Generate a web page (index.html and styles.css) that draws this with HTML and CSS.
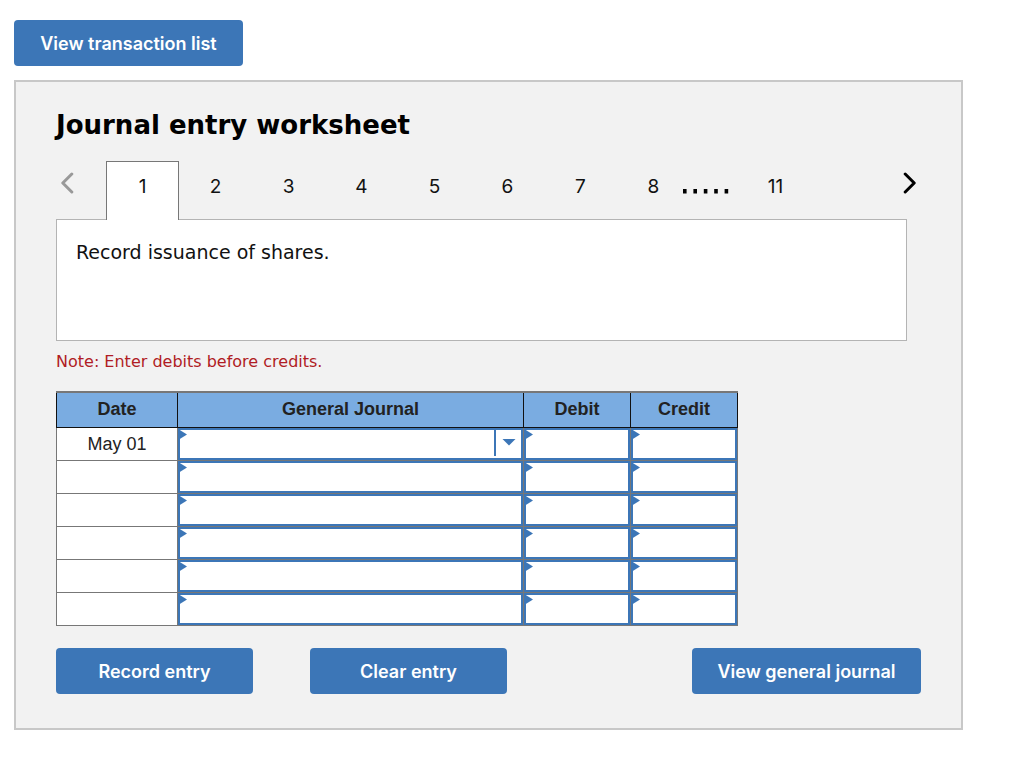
FILE: index.html
```html
<!DOCTYPE html>
<html lang="en">
<head>
    <meta charset="UTF-8">
    <meta name="viewport" content="width=device-width, initial-scale=1.0">
    <title>Journal entry worksheet</title>
    <link rel="stylesheet" href="styles.css">
</head>
<body>

    <button type="button" class="button button-wide">View transaction list</button>

    <!-- Worksheet -->
    <div class="worksheet">
        <h1>Journal entry worksheet</h1>

        <!-- Entry tabs -->
        <div class="tabs">
            <button type="button" class="arrow prev" aria-label="Previous entry" disabled>
                <svg width="14" height="22" viewBox="0 0 14 22"><path d="M11.8 2 L2.8 11 L11.8 20"/></svg>
            </button>
            <button type="button" class="tab active">1</button>
            <button type="button" class="tab">2</button>
            <button type="button" class="tab">3</button>
            <button type="button" class="tab">4</button>
            <button type="button" class="tab">5</button>
            <button type="button" class="tab">6</button>
            <button type="button" class="tab">7</button>
            <button type="button" class="tab">8</button>
            <svg class="dots" width="50" height="5" viewBox="0 0 50 5"><path d="M2 0h3.6v4.4h-3.6zM12.4 0h3.6v4.4h-3.6zM22.8 0h3.6v4.4h-3.6zM33.2 0h3.6v4.4h-3.6zM43.6 0h3.6v4.4h-3.6z"/></svg>
            <button type="button" class="tab last">11</button>
            <button type="button" class="arrow next" aria-label="Next entry">
                <svg width="14" height="22" viewBox="0 0 14 22"><path d="M2.2 2 L11.2 11 L2.2 20"/></svg>
            </button>
        </div>

        <div class="description">Record issuance of shares.</div>
        <p class="note">Note: Enter debits before credits.</p>

        <!-- Journal table -->
        <table class="journal">
            <thead>
                <tr>
                    <th class="col-date">Date</th>
                    <th>General Journal</th>
                    <th class="col-amount">Debit</th>
                    <th class="col-amount">Credit</th>
                </tr>
            </thead>
            <tbody>
                <tr>
                    <td>May 01</td>
                    <td class="entry account"><select aria-label="Account, line 1"><option></option></select></td>
                    <td class="entry"><input type="text" aria-label="Debit, line 1"></td>
                    <td class="entry"><input type="text" aria-label="Credit, line 1"></td>
                </tr>
                <tr>
                    <td></td>
                    <td class="entry"><input type="text" aria-label="Account, line 2"></td>
                    <td class="entry"><input type="text" aria-label="Debit, line 2"></td>
                    <td class="entry"><input type="text" aria-label="Credit, line 2"></td>
                </tr>
                <tr>
                    <td></td>
                    <td class="entry"><input type="text" aria-label="Account, line 3"></td>
                    <td class="entry"><input type="text" aria-label="Debit, line 3"></td>
                    <td class="entry"><input type="text" aria-label="Credit, line 3"></td>
                </tr>
                <tr>
                    <td></td>
                    <td class="entry"><input type="text" aria-label="Account, line 4"></td>
                    <td class="entry"><input type="text" aria-label="Debit, line 4"></td>
                    <td class="entry"><input type="text" aria-label="Credit, line 4"></td>
                </tr>
                <tr>
                    <td></td>
                    <td class="entry"><input type="text" aria-label="Account, line 5"></td>
                    <td class="entry"><input type="text" aria-label="Debit, line 5"></td>
                    <td class="entry"><input type="text" aria-label="Credit, line 5"></td>
                </tr>
                <tr>
                    <td></td>
                    <td class="entry"><input type="text" aria-label="Account, line 6"></td>
                    <td class="entry"><input type="text" aria-label="Debit, line 6"></td>
                    <td class="entry"><input type="text" aria-label="Credit, line 6"></td>
                </tr>
            </tbody>
        </table>

        <!-- Actions -->
        <div class="actions">
            <button type="button" class="button">Record entry</button>
            <button type="button" class="button">Clear entry</button>
            <button type="button" class="button button-wide">View general journal</button>
        </div>
    </div>

</body>
</html>
```
FILE: styles.css
```css
* { box-sizing: border-box; }
body { margin: 0; padding: 20px 61px 32px 14px; background: #fff; color: #111; font-family: Verdana, "DejaVu Sans", sans-serif; }

.button { display: block; width: 197px; height: 46px; padding: 2px 0 0; border: none; border-radius: 4px; background: #3c76b7; color: #fff; font: 600 18px/24px Inter, sans-serif; cursor: pointer; }
.button-wide { width: 229px; }

.worksheet { margin-top: 14px; padding: 25px 40px 34px; border: 2px solid #c8c8c8; background: #f2f2f2; }
h1 { margin: 0; color: #000; font-size: 26px; line-height: 36px; }

/* tabs */
.tabs { display: flex; align-items: flex-start; height: 59px; margin-top: 18px; margin-bottom: -1px; position: relative; }
.tab { width: 73px; height: 59px; padding: 0 0 9px; border: 1px solid transparent; border-bottom: none; background: none; color: #111; font: 19px/24px Inter, sans-serif; cursor: pointer; }
.tab.active { border-color: #777; background: #fff; }
.dots { margin: 28px 0 0 -9px; fill: #000; }
.tab.last { margin-left: 8px; }
.arrow { display: flex; padding: 0; border: none; background: none; cursor: pointer; }
.arrow path { fill: none; stroke: #000; stroke-width: 3; stroke-linecap: round; stroke-linejoin: round; }
.prev { margin: 11px 32px 0 4px; }
.prev path { stroke: #999; }
.next { margin: 11px 4px 0 auto; }

.description { min-height: 122px; margin-right: 14px; padding: 19px; border: 1px solid #b4b4b4; background: #fff; font-size: 19px; line-height: 26px; }
.note { margin: 9px 0 0; color: #b01c24; font-size: 16px; line-height: 24px; }

/* journal table */
.journal { width: 100%; max-width: 682px; margin-top: 17px; border-collapse: collapse; table-layout: fixed; border: 1px solid #777; border-top-width: 2px; background: #fff; color: #222; font: 18px/24px Arial, "Liberation Sans", sans-serif; }
.journal th { height: 35px; padding: 0 0 1px; border: 1px solid #111; border-top: 2px solid #777; background: #7aace1; text-align: center; }
.journal td { height: 33px; padding: 0; border: 1px solid #777; text-align: center; }
.col-date { width: 121px; }
.col-amount { width: 107px; }

.journal .entry { position: relative; }
.entry input, .entry select { display: block; width: 100%; height: 32px; margin: 0; padding: 0 10px; border: 2px solid #3c76b7; border-radius: 0; background: #fff; font: inherit; appearance: none; outline: none; }
.entry::before { content: ""; position: absolute; left: 1px; top: 2px; width: 8px; height: 10px; background: #3c76b7; clip-path: polygon(0 0, 100% 50%, 0 100%); }

/* drop-down arrow and its divider */
.account::after { content: ""; position: absolute; right: 7px; top: 11px; width: 14px; height: 7px; background: #3c76b7; clip-path: polygon(0 0, 100% 0, 50% 100%); }
.entry select { background: linear-gradient(#3c76b7, #3c76b7) no-repeat right 25px top 0 / 2px 26px #fff; }

.actions { display: flex; margin-top: 22px; }
.actions .button + .button { margin-left: 57px; }
.actions .button-wide:last-child { margin-left: auto; }
```
